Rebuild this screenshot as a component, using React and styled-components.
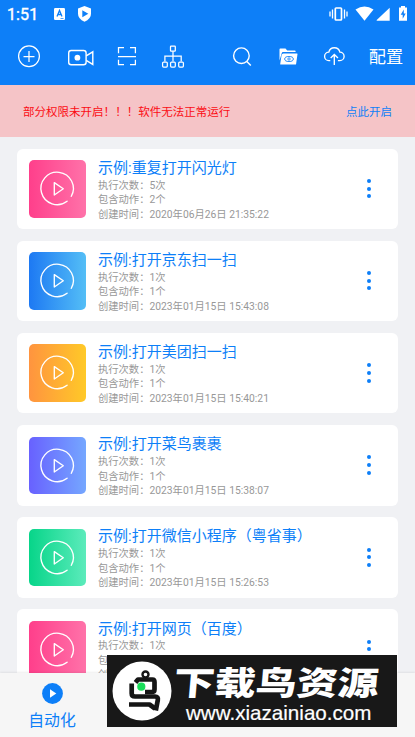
import React from "react";
import styled, { createGlobalStyle } from "styled-components";

const BLUE = "#0d7ff8";

const GlobalStyle = createGlobalStyle`
  * { box-sizing: border-box; }
  body { margin: 0; background: #f0f1f4; font-family: Roboto, "Noto Sans CJK SC", sans-serif; }
  svg { display: block; flex: none; }
`;

const Screen = styled.div`
  position: relative;
  width: 415px;
  height: 737px;
  display: flex;
  flex-direction: column;
  overflow: hidden;
  background: #f0f1f4;
`;
const Header = styled.header`
  flex: none;
  height: 85px;
  background: ${BLUE};
  color: #fff;
`;
const StatusBar = styled.div`
  height: 28px;
  padding-left: 7px;
  display: flex;
  align-items: center;
`;
const Clock = styled.span`
  width: 42px;
  font-size: 16px;
  line-height: 29px;
  height: 28px;
  font-weight: 400;
  letter-spacing: 0.1px;
  -webkit-text-stroke: 0.4px #fff;
`;
const StatusIcons = styled.div`
  margin-left: ${(p) => (p.$end ? "auto" : "0")};
`;
const Toolbar = styled.nav`
  height: 57px;
  display: flex;
  padding-left: 6px;
`;
const ToolGroup = styled.div`
  display: flex;
  margin-right: ${(p) => p.$gap}px;
`;
const Configure = styled.span`
  width: 46px;
  line-height: 58px;
  font-size: 17.2px;
  text-align: center;
  white-space: nowrap;
`;
const Notice = styled.div`
  flex: none;
  height: 52px;
  padding: 2px 23px 0;
  display: flex;
  justify-content: space-between;
  align-items: center;
  background: #f5c4c7;
  color: #fb0d14;
  font-size: 11.52px;
  line-height: 21px;
`;
const NoticeLink = styled.span`
  color: ${BLUE};
`;
const List = styled.main`
  flex: 1;
  min-height: 0;
  overflow: hidden;
  padding: 12px 17px 0;
  display: flex;
  flex-direction: column;
  gap: 11.8px;
`;
const Card = styled.article`
  flex: none;
  height: 80.3px;
  border-radius: 6px;
  background: #fff;
  display: flex;
  padding: 11.3px 27.2px 0 12px;
`;
const Thumb = styled.div`
  width: 57.4px;
  height: 57.4px;
  border-radius: 5px;
  flex: none;
  background: linear-gradient(90deg, ${(p) => p.$from}, ${(p) => p.$to});
`;
const Info = styled.div`
  flex: 1;
  padding-left: 11.6px;
  margin-top: -1.2px;
`;
const Title = styled.h2`
  margin: 0;
  font-size: 15px;
  font-weight: 400;
  line-height: 19.6px;
  height: 19.6px;
  color: ${BLUE};
  white-space: nowrap;
`;
const Meta = styled.p`
  margin: 0;
  font-size: 10.3px;
  line-height: 14.6px;
  height: 14.6px;
  color: #989898;
  white-space: nowrap;
`;
const More = styled.div`
  height: 57px;
  display: flex;
  flex-direction: column;
  align-items: center;
  justify-content: center;
  gap: 3.6px;
`;
const Dot = styled.i`
  width: 4px;
  height: 4px;
  border-radius: 50%;
  background: ${BLUE};
`;
const BottomNav = styled.footer`
  flex: none;
  height: 64px;
  background: #f6f6f6;
  box-shadow: 0 -1px 2px rgba(0, 0, 0, 0.07);
  z-index: 1;
`;
const Tab = styled.div`
  width: 104px;
  padding-top: 10px;
  display: flex;
  flex-direction: column;
  align-items: center;
  color: ${BLUE};
  font-size: 15.9px;
  line-height: 23px;
  gap: 5px;
`;
const Banner = styled.aside`
  position: absolute;
  z-index: 2;
  left: 107px;
  top: 655px;
  width: 290px;
  height: 72px;
  display: flex;
  align-items: center;
  padding-left: 5px;
  background: #181818;
  color: #fff;
`;
const BannerText = styled.div`
  margin-left: 1px;
  padding-top: 3px;
  display: flex;
  flex-direction: column;
`;
const BannerName = styled.strong`
  font: 900 41px/40px "Noto Sans CJK SC", sans-serif;
  height: 39px;
  white-space: nowrap;
  transform: scaleY(0.8) skewX(-4deg);
  margin-left: 1px;
`;
const BannerUrl = styled.span`
  font: 400 20.6px/25px "Liberation Sans", sans-serif;
  -webkit-text-stroke: 0.2px #fff;
  margin-left: 13px;
  white-space: nowrap;
`;

const tasks = [
  ["重复打开闪光灯", "5", "2", "2020年06月26日 21:35:22", "#ff3f8b", "#ff72a9"],
  ["打开京东扫一扫", "1", "1", "2023年01月15日 15:43:08", "#1d79f3", "#54bef6"],
  ["打开美团扫一扫", "1", "1", "2023年01月15日 15:40:21", "#ff943f", "#ffc928"],
  ["打开菜鸟裹裹", "1", "1", "2023年01月15日 15:38:07", "#6861ff", "#75a7ff"],
  ["打开微信小程序（粤省事）", "1", "1", "2023年01月15日 15:26:53", "#07d589", "#5cebbb"],
  ["打开网页（百度）", "1", "1", "2023年01月15日 15:20:36", "#ff3f8b", "#ff72a9"],
];

const ToolIcon = ({ x, w = 46, children }) => (
  <svg width={w} height="57" viewBox={`${x} 28 ${w} 57`} fill="none" stroke="#fff" strokeWidth="1.25">
    {children}
  </svg>
);

const PlayRing = () => (
  <svg width="57.4" height="57.4" viewBox="0 0 57.4 57.4" fill="none" stroke="#fff" strokeWidth="1.35">
    <path d="M38.1 41.2A16.2 16.2 0 1 1 42.3 36.3" strokeLinecap="round" />
    <path d="M25.3 22.6v12.4l9-6.2z" strokeLinejoin="round" />
  </svg>
);

const Logo = () => (
  <svg width="60" height="60" viewBox="0 0 60 60">
    <circle cx="30" cy="30" r="29.5" fill="#fff" />
    <g fill="none" stroke="#151515" strokeWidth="4.7" strokeLinejoin="round">
      <circle cx="33.5" cy="13.5" r="3" strokeWidth="2.4" />
      <path d="M23.5 21.5 26 18.500H40.500Q42.500 18.500 42.500 21V28.500Q42.500 31 39.500 31H33" />
      <path d="M19.700 22.500V32.500Q19.700 35.500 23 35.500H43Q46.500 35.500 45.800 39L43.800 49.500" />
      <path d="M17 43.500H37.500L43 47.500" />
    </g>
    <circle cx="29.3" cy="25.7" r="4.1" fill="#19dd59" />
  </svg>
);

export default function App() {
  return (
    <Screen>
      <GlobalStyle />
      <Header>
        <StatusBar>
          <Clock>1:51</Clock>
          <StatusIcons>
            <svg width="46" height="28" viewBox="49 0 46 28">
              <rect x="54" y="8" width="11" height="12" rx="1.2" fill="#fff" />
              <path d="M57 16.4 59.5 10.5 62 16.4M58 14.5h3" fill="none" stroke={BLUE} strokeWidth="1.3" />
              <path d="M60.5 18.5h3" stroke={BLUE} strokeWidth=".7" />
              <path d="M84.5 6 91 8.500v5.300q0 5.300-6.500 8-6.500-2.700-6.500-8V8.500z" fill="#fff" />
              <path d="M82.3 10.3v7l6-3.500z" fill={BLUE} />
            </svg>
          </StatusIcons>
          <StatusIcons $end>
            <svg width="95" height="28" viewBox="320 0 95 28" fill="#fff">
              <rect x="335.3" y="8" width="6.2" height="12" rx=".8" fill="none" stroke="#fff" strokeWidth="1.7" />
              <path d="M332.5 9.500v9M330 11.500v5M344.500 9.500v9M347 11.500v5" stroke="#fff" strokeWidth="1.3" />
              <path d="M355.5 9.600q9-6 18 0l-9 11.200z" />
              <path d="M376.7 20.800V20L389.700 7.800v13z" />
              <path d="M401 6h4v1.600h2V20.800h-8V7.600h2z" />
              <path d="M403.8 9.500 400.700 14.700h2v4l3-5.300h-1.900z" fill={BLUE} />
            </svg>
          </StatusIcons>
        </StatusBar>
        <Toolbar>
          <ToolGroup $gap={23}>
            <ToolIcon x={6}>
              <circle cx="29" cy="56.3" r="10.4" />
              <path d="M29 51v11M23.500 56.500h11" />
            </ToolIcon>
            <ToolIcon x={52} w={52}>
              <rect x="68.7" y="50.5" width="17.4" height="14.3" rx="2.5" strokeWidth="1.4" />
              <path d="m86.200 55.800 6.600-4v12.600l-6.600-4" strokeWidth="1.4" />
              <circle cx="77.4" cy="57.7" r="2.9" fill="#fff" stroke="none" />
            </ToolIcon>
            <ToolIcon x={104}>
              <path d="M118.500 53.200v-5.600h5.500M130 47.600h5.400v5.600M118.500 59.700v4.900h5.500M130 64.600h5.400v-4.900M118 56.500h18" />
            </ToolIcon>
            <ToolIcon x={150}>
              <rect x="170.5" y="46.2" width="4.8" height="5" rx=".6" />
              <path d="M173 51.300v10.300M164.900 61.600v-5.500h16.300v5.500" />
              <rect x="162.6" y="62" width="4.7" height="5" rx="1" />
              <rect x="170.6" y="62" width="4.7" height="5" rx="1" />
              <rect x="178.7" y="62" width="4.7" height="5" rx="1" />
            </ToolIcon>
          </ToolGroup>
          <ToolGroup $gap={6}>
            <ToolIcon x={219}>
              <circle cx="241.4" cy="55.7" r="7.8" strokeWidth="1.4" />
              <path d="m246.800 61.500 4 3.900" strokeWidth="1.4" />
            </ToolIcon>
            <ToolIcon x={265}>
              <path d="M279.500 60.500V49.300q0-.8.800-.8h5.200l1.700 2h7.600q.8 0 .8.800v.8H283q-1 0-1.200 1z" fill="#fff" stroke="none" />
              <path d="M283.500 53.400H297q.6 0 .5.700l-1.400 9.800q-.1.700-.8.700h-14.500q-.7 0-.6-.7l1.400-8.900q.3-1.600 1.900-1.600z" fill="#fff" stroke="none" />
              <ellipse cx="289" cy="59" rx="4.3" ry="2.5" stroke={BLUE} strokeWidth=".9" />
              <circle cx="289" cy="59" r="1.2" stroke={BLUE} strokeWidth=".8" />
            </ToolIcon>
            <ToolIcon x={311}>
              <path d="M330.300 60.600h-1.500a4.200 4.200 0 0 1 0-8.400 5.700 5.700 0 0 1 11.100 0 4.200 4.200 0 0 1 0 8.400h-2" strokeWidth="1.35" />
              <path d="M334.300 65V54.700M330.700 58l3.600-3.500L338 58" strokeWidth="1.35" />
            </ToolIcon>
          </ToolGroup>
          <Configure>配置</Configure>
        </Toolbar>
      </Header>
      <Notice>
        <span>部分权限未开启！！！软件无法正常运行</span>
        <NoticeLink>点此开启</NoticeLink>
      </Notice>
      <List>
        {tasks.map(([name, runs, actions, created, from, to]) => (
          <Card key={name}>
            <Thumb $from={from} $to={to}><PlayRing /></Thumb>
            <Info>
              <Title>示例:{name}</Title>
              <Meta>执行次数：{runs}次</Meta>
              <Meta>包含动作：{actions}个</Meta>
              <Meta>创建时间：{created}</Meta>
            </Info>
            <More><Dot /><Dot /><Dot /></More>
          </Card>
        ))}
      </List>
      <BottomNav>
        <Tab>
          <svg width="21" height="21" viewBox="0 0 21 21">
            <circle cx="10.5" cy="10.5" r="10.4" fill={BLUE} />
            <path d="M8 6.200v8.600l6.300-4.300z" fill="#fff" />
          </svg>
          <span>自动化</span>
        </Tab>
      </BottomNav>
      <Banner>
        <Logo />
        <BannerText>
          <BannerName>下载鸟资源</BannerName>
          <BannerUrl>www.xiazainiao.com</BannerUrl>
        </BannerText>
      </Banner>
    </Screen>
  );
}
